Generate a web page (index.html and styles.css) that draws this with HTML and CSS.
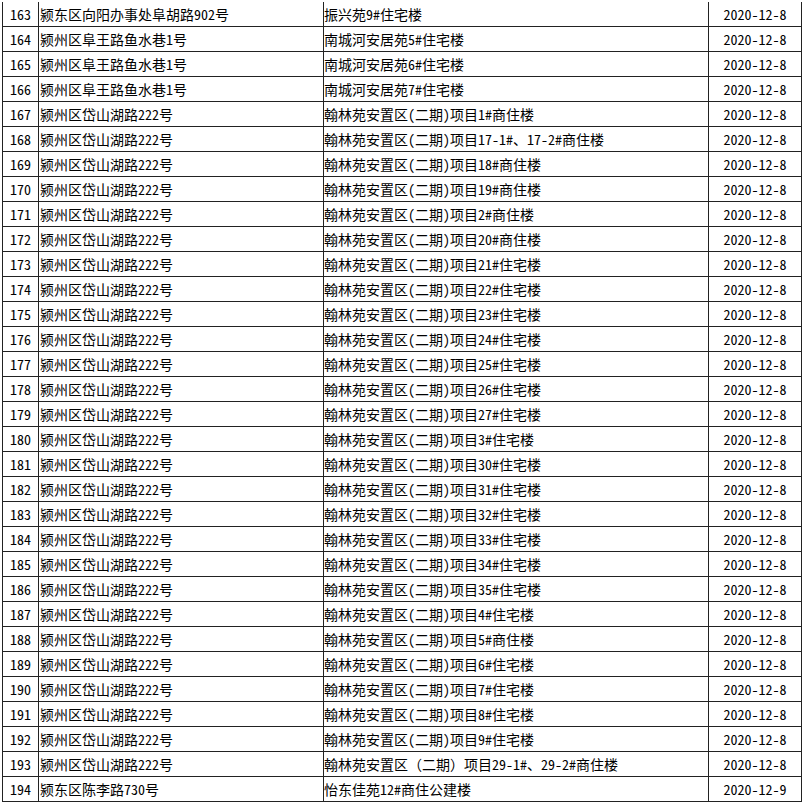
FILE: index.html
```html
<!DOCTYPE html>
<html lang="zh-CN">
<head>
<meta charset="utf-8">
<title>表格</title>
<link rel="stylesheet" href="styles.css">
</head>
<body>
<table class="list">
<tbody>
<tr><td class="no">163</td><td class="addr">颍东区向阳办事处阜胡路902号</td><td class="name">振兴苑9#住宅楼</td><td class="date">2020-12-8</td></tr>
<tr><td class="no">164</td><td class="addr">颍州区阜王路鱼水巷1号</td><td class="name">南城河安居苑5#住宅楼</td><td class="date">2020-12-8</td></tr>
<tr><td class="no">165</td><td class="addr">颍州区阜王路鱼水巷1号</td><td class="name">南城河安居苑6#住宅楼</td><td class="date">2020-12-8</td></tr>
<tr><td class="no">166</td><td class="addr">颍州区阜王路鱼水巷1号</td><td class="name">南城河安居苑7#住宅楼</td><td class="date">2020-12-8</td></tr>
<tr><td class="no">167</td><td class="addr">颍州区岱山湖路222号</td><td class="name">翰林苑安置区(二期)项目1#商住楼</td><td class="date">2020-12-8</td></tr>
<tr><td class="no">168</td><td class="addr">颍州区岱山湖路222号</td><td class="name">翰林苑安置区(二期)项目17-1#、17-2#商住楼</td><td class="date">2020-12-8</td></tr>
<tr><td class="no">169</td><td class="addr">颍州区岱山湖路222号</td><td class="name">翰林苑安置区(二期)项目18#商住楼</td><td class="date">2020-12-8</td></tr>
<tr><td class="no">170</td><td class="addr">颍州区岱山湖路222号</td><td class="name">翰林苑安置区(二期)项目19#商住楼</td><td class="date">2020-12-8</td></tr>
<tr><td class="no">171</td><td class="addr">颍州区岱山湖路222号</td><td class="name">翰林苑安置区(二期)项目2#商住楼</td><td class="date">2020-12-8</td></tr>
<tr><td class="no">172</td><td class="addr">颍州区岱山湖路222号</td><td class="name">翰林苑安置区(二期)项目20#商住楼</td><td class="date">2020-12-8</td></tr>
<tr><td class="no">173</td><td class="addr">颍州区岱山湖路222号</td><td class="name">翰林苑安置区(二期)项目21#住宅楼</td><td class="date">2020-12-8</td></tr>
<tr><td class="no">174</td><td class="addr">颍州区岱山湖路222号</td><td class="name">翰林苑安置区(二期)项目22#住宅楼</td><td class="date">2020-12-8</td></tr>
<tr><td class="no">175</td><td class="addr">颍州区岱山湖路222号</td><td class="name">翰林苑安置区(二期)项目23#住宅楼</td><td class="date">2020-12-8</td></tr>
<tr><td class="no">176</td><td class="addr">颍州区岱山湖路222号</td><td class="name">翰林苑安置区(二期)项目24#住宅楼</td><td class="date">2020-12-8</td></tr>
<tr><td class="no">177</td><td class="addr">颍州区岱山湖路222号</td><td class="name">翰林苑安置区(二期)项目25#住宅楼</td><td class="date">2020-12-8</td></tr>
<tr><td class="no">178</td><td class="addr">颍州区岱山湖路222号</td><td class="name">翰林苑安置区(二期)项目26#住宅楼</td><td class="date">2020-12-8</td></tr>
<tr><td class="no">179</td><td class="addr">颍州区岱山湖路222号</td><td class="name">翰林苑安置区(二期)项目27#住宅楼</td><td class="date">2020-12-8</td></tr>
<tr><td class="no">180</td><td class="addr">颍州区岱山湖路222号</td><td class="name">翰林苑安置区(二期)项目3#住宅楼</td><td class="date">2020-12-8</td></tr>
<tr><td class="no">181</td><td class="addr">颍州区岱山湖路222号</td><td class="name">翰林苑安置区(二期)项目30#住宅楼</td><td class="date">2020-12-8</td></tr>
<tr><td class="no">182</td><td class="addr">颍州区岱山湖路222号</td><td class="name">翰林苑安置区(二期)项目31#住宅楼</td><td class="date">2020-12-8</td></tr>
<tr><td class="no">183</td><td class="addr">颍州区岱山湖路222号</td><td class="name">翰林苑安置区(二期)项目32#住宅楼</td><td class="date">2020-12-8</td></tr>
<tr><td class="no">184</td><td class="addr">颍州区岱山湖路222号</td><td class="name">翰林苑安置区(二期)项目33#住宅楼</td><td class="date">2020-12-8</td></tr>
<tr><td class="no">185</td><td class="addr">颍州区岱山湖路222号</td><td class="name">翰林苑安置区(二期)项目34#住宅楼</td><td class="date">2020-12-8</td></tr>
<tr><td class="no">186</td><td class="addr">颍州区岱山湖路222号</td><td class="name">翰林苑安置区(二期)项目35#住宅楼</td><td class="date">2020-12-8</td></tr>
<tr><td class="no">187</td><td class="addr">颍州区岱山湖路222号</td><td class="name">翰林苑安置区(二期)项目4#住宅楼</td><td class="date">2020-12-8</td></tr>
<tr><td class="no">188</td><td class="addr">颍州区岱山湖路222号</td><td class="name">翰林苑安置区(二期)项目5#商住楼</td><td class="date">2020-12-8</td></tr>
<tr><td class="no">189</td><td class="addr">颍州区岱山湖路222号</td><td class="name">翰林苑安置区(二期)项目6#住宅楼</td><td class="date">2020-12-8</td></tr>
<tr><td class="no">190</td><td class="addr">颍州区岱山湖路222号</td><td class="name">翰林苑安置区(二期)项目7#住宅楼</td><td class="date">2020-12-8</td></tr>
<tr><td class="no">191</td><td class="addr">颍州区岱山湖路222号</td><td class="name">翰林苑安置区(二期)项目8#住宅楼</td><td class="date">2020-12-8</td></tr>
<tr><td class="no">192</td><td class="addr">颍州区岱山湖路222号</td><td class="name">翰林苑安置区(二期)项目9#住宅楼</td><td class="date">2020-12-8</td></tr>
<tr><td class="no">193</td><td class="addr">颍州区岱山湖路222号</td><td class="name">翰林苑安置区（二期）项目29-1#、29-2#商住楼</td><td class="date">2020-12-8</td></tr>
<tr><td class="no">194</td><td class="addr">颍东区陈李路730号</td><td class="name">怡东佳苑12#商住公建楼</td><td class="date">2020-12-9</td></tr>
</tbody>
</table>
</body>
</html>
```
FILE: styles.css
```css
html, body {
  margin: 0;
  padding: 0;
  background: #fff;
}

body {
  padding: 2px 0 0 2px;
  font-family: "Noto Sans Mono CJK SC", "Noto Sans CJK SC", sans-serif;
  font-size: 14px;
  font-weight: 300;
  color: #000;
}

.list {
  border-collapse: separate;
  border-spacing: 0;
  table-layout: fixed;
  width: 800px;
}

.list td {
  box-sizing: border-box;
  height: 25px;
  padding: 0 0 0 1px;
  line-height: 24px;
  border-right: 1px solid #222;
  border-bottom: 1px solid #222;
  vertical-align: middle;
  white-space: nowrap;
  overflow: hidden;
}

.list td.no {
  width: 37px;
  border-left: 1px solid #222;
  text-align: center;
  padding: 0;
}

.list td.addr {
  width: 285px;
}

.list td.name {
  width: 385px;
  padding-left: 0;
}

.list td.date {
  width: 93px;
  text-align: center;
  padding: 0;
}
```
